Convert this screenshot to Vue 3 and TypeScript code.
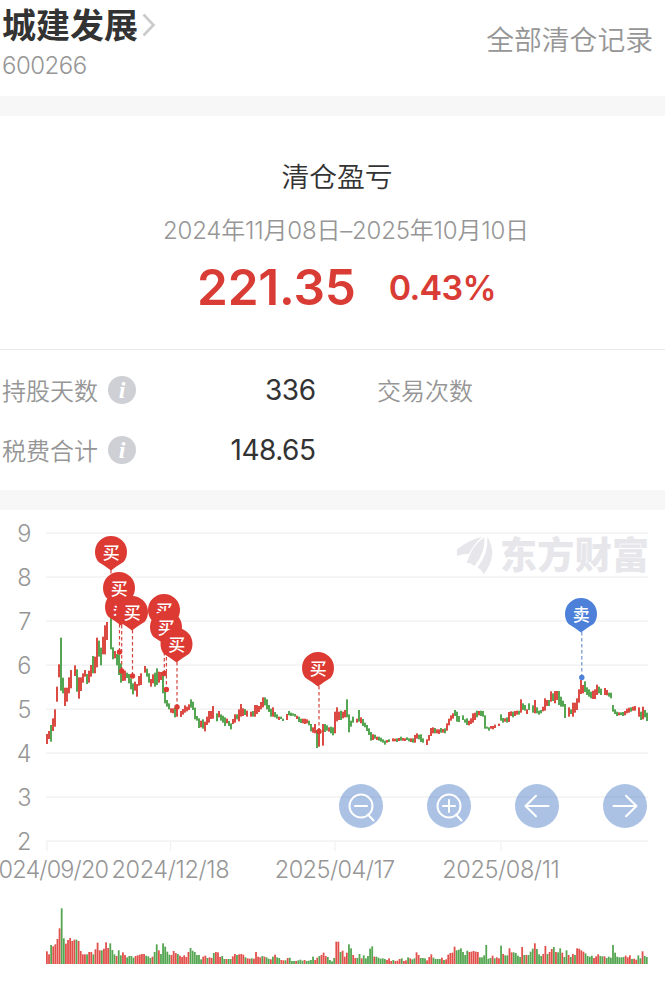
<script setup lang="ts">
interface Bar {
  x: number
  y: number
  h: number
  up: boolean
}

interface Marker {
  x: number
  y: number
  lineX: number
  endY: number
  label: string
  kind: 'buy' | 'sell'
}

// Each group: origin x, origin y, then "x top bottom direction" in thirds of a pixel.
const priceGroups: { ox: number; oy: number; rows: string }[] = [
  {
    ox: 0,
    oy: 10,
    rows: `141 642 672 r,147 633 657 r,153 615 665 g,159 595 633 r,165 568 620 r,171 500 545 r,177 433 472 r,183 353 512 g,189 473 520 g,195 503 558 r,201 503 545 r,207 472 520 r,213 450 505 r,225 436 468 r,231 448 515 g,237 472 536 r,243 472 513 r,249 460 488 r,255 450 470 r,261 462 492 g,267 452 488 r,273 435 470 r,279 408 460 g,285 410 460 r,291 353 442 r,297 362 410 g,303 383 436 g,309 350 403 r,315 316 403 r,321 306 360 r,333 290 388 g,339 382 418 g,345 393 415 r,351 402 436 g,357 403 465 g,363 430 488 g,369 455 483 r,375 452 482 r,381 458 474 g,387 462 490 g,393 475 508 g,399 490 523 g,405 485 512 r,411 492 530 r,417 468 497 r,423 460 495 r,435 438 458 r,441 446 470 g,447 460 488 g,453 477 500 r,459 463 490 r,465 458 500 g,471 445 495 g,477 455 488 r,483 456 480 r,489 456 520 g,495 508 550 g,501 540 560 g,507 550 568 g,513 565 578 r,519 565 580 r,525 562 592 g,531 560 590 r,543 573 591 r,549 567 584 r,555 556 578 r,561 560 574 r,567 553 570 r,573 538 563 g,579 545 570 g,585 563 598 g,591 588 602 g,597 595 624 g,603 602 622 r,609 598 626 g,615 605 634 r,621 590 615 r,627 573 608 r,633 573 597 r,639 558 596 r,651 580 604 g`,
  },
  {
    ox: 190,
    oy: 110,
    rows: `87 273 292 r,93 283 302 g,99 287 308 g,105 292 318 g,111 296 310 r,117 303 318 g,123 310 328 g,129 297 312 r,135 283 308 r,141 283 298 g,147 268 304 r,153 252 290 r,159 265 288 r,165 267 285 g,171 272 290 r,183 275 290 r,189 273 290 g,195 255 290 r,201 255 282 r,207 258 276 r,213 246 268 r,219 232 262 r,225 232 256 g,231 238 268 g,237 255 276 g,243 266 290 g,249 262 290 r,255 276 292 g,261 283 296 g,267 290 300 r,273 290 297 g,279 296 303 g,291 282 300 r,297 273 286 g,303 278 288 g,309 280 287 g,315 282 290 g,321 287 297 r,327 290 306 g,333 296 309 g,339 296 310 r,345 296 312 r,351 298 310 r,357 302 316 g,363 312 334 g,369 322 338 r,375 312 340 r,381 330 384 g,387 325 380 r,399 312 377 r,405 312 336 g,411 316 332 g,417 322 335 r,423 320 340 g,429 322 346 g,435 275 340 r,441 262 304 r,447 275 300 r,453 272 300 g,459 275 295 r,465 270 292 r,471 238 292 g,477 283 337 g,483 302 320 g,489 290 308 g,501 296 308 r,507 270 305 g,513 292 310 r,519 297 318 g,525 308 322 g,531 315 333 g,537 325 345 g,543 336 362 g,549 343 360 r,555 344 356 g,561 350 360 r,567 350 362 g,573 353 365 g,579 358 368 g,585 362 374 g,591 360 368 r,597 358 366 g,609 355 364 r,615 356 364 r,621 355 366 g,627 354 363 r`,
  },
  {
    ox: 400,
    oy: 10,
    rows: `3 650 662 g,9 654 662 r,15 655 663 r,21 652 660 g,27 655 664 g,33 655 666 r,39 655 668 g,45 645 668 r,51 640 656 r,57 644 658 g,63 643 666 g,69 655 668 g,81 658 675 r,87 645 662 r,93 624 648 r,99 622 640 r,105 624 640 g,111 628 640 r,117 628 642 r,123 624 638 g,129 627 638 r,135 625 640 g,141 610 632 r,147 596 616 r,153 586 602 r,159 580 596 r,165 570 588 g,171 575 605 g,177 588 606 g,189 586 600 g,195 598 608 g,201 595 615 g,207 602 616 r,213 595 612 r,219 580 608 r,225 578 600 r,231 572 592 g,237 573 586 r,243 572 588 g,249 573 590 g,255 586 626 g,261 620 626 g,267 622 632 g,273 618 626 r,279 618 628 r,285 614 624 r,297 611 618 r,303 583 602 g,309 594 608 g,315 595 605 r,321 592 608 g,327 576 606 r,333 574 588 r,339 575 592 g,345 573 588 r,351 572 584 r,357 572 584 g,363 538 578 r,369 550 570 g,375 555 572 g,381 568 582 r,387 550 570 g,399 556 578 g,405 540 580 r,411 562 580 g,417 572 584 g,423 570 580 g,429 560 574 r,435 535 572 r,441 540 558 r,447 540 558 g,453 514 545 r,459 520 543 g,465 513 550 r,471 513 540 r,477 513 555 g,483 530 560 g,489 542 560 g,495 552 594 g,507 562 590 r,513 568 582 g,519 548 590 r,525 548 578 r,531 535 570 r,537 508 548 r,543 480 522 r,549 495 520 r,555 484 516 g,561 502 525 g,567 508 530 g,573 515 535 g,579 512 537 r,585 508 537 r,591 494 525 r,597 500 520 g,603 506 525 g,615 504 525 r,621 510 526 r,627 518 530 g,633 518 535 g,639 555 575 g,645 568 582 g,651 575 588 g,657 577 586 r,663 577 585 g,669 576 588 g,675 573 586 r,681 566 580 r,687 563 578 r,693 562 575 g,699 560 572 r,705 558 572 r,717 562 590 r,723 575 600 g,729 560 598 r,735 570 592 g,741 578 603 g`,
  },
]

const candles: Bar[] = priceGroups.flatMap(({ ox, oy, rows }) =>
  rows.split(',').map((row) => {
    const [x, top, bottom, dir] = row.trim().split(' ')
    return {
      x: ox + Math.floor(Number(x) / 3) - 1,
      y: oy + Number(top) / 3,
      h: (Number(bottom) - Number(top)) / 3,
      up: dir === 'r',
    }
  }),
)

// Volume per session in thirds of a pixel, suffixed with the direction.
const volumeData =
  '38r 29r 57g 53r 59r 75r 107r 167g 77g 61r 72r 78r 69r 73r 73g 69r 39r 29r 29r 29g 36r 36r 29g 44r 64r 41r 41g 46r 65r 48r 62g 42g 29g 24r 41g 26g 35r 27r 20g 24g 24g 19g 24r 26r 28r 30r 30r 25g 23g 18g 22r 36g 59g 41r 30g 62g 52g 37g 28g 27r 39r 33r 30g 25r 21r 26r 21r 36r 48g 40g 36g 27g 27g 14g 22r 25r 18g 20r 18r 33g 36r 35r 21r 24g 15g 15r 15g 15g 23r 30r 27g 29r 30r 28r 20g 17r 16r 17g 16r 36r 22r 20r 24g 22r 20g 16g 14r 22g 28r 20g 18g 12r 11r 11g 18r 19g 9g 9g 9r 11g 13g 10g 12r 9g 10g 12g 22g 12r 19r 24g 27r 34r 24r 21g 12g 8g 18g 67r 67r 36g 40r 22r 34r ' +
  '59g 47g 27r 18r 18g 30g 17r 26g 17g 24g 46g 53g 22r 22g 19g 16g 17g 15g 12r 17r 9r 12g 9r 10r 15r 17g 9r 11r 20g 17r 14g 17g 35r 27r 18g 18g 17g 11r 21r 29r 19g 15g 15g 15g 19r 12g 14r 28r 33r 34r 52r 41g 43g 47g 36g 27g 40g 36r 37r 39r 37r 36r 20g 20g 26g 57g 16g 18g 25r 17g 20r 17r 55g 30r 26g 26g 47r 35r 35g 33g 25g 21g 51r 27g 27r 27g 37g 46g 62r 45g 29g 24g 30r 54r 30g 36r 45r 51g 36r 35g 47g 34r 21g 41g 27r 21g 30r 27g 47r 46r 41r 37r 32g 24g 22g 25g 18r 23r 29r 24g 23g 23r 18g 22g 19g 57g 34g 22g 20g 20g 21g 25r 20r 26r 15g 16r 13r 26g 17g 38r 24g 21g'

const volumeItems = volumeData.split(' ')
const pitch = 602 / volumeItems.length
const volumes: Bar[] = volumeItems.map((item, i) => {
  const h = parseInt(item, 10) / 3
  return { x: 46 + i * pitch, y: 454 - h, h, up: item.endsWith('r') }
})

const markers: Marker[] = [
  { x: 111, y: 42, lineX: 111, endY: 64, label: '买', kind: 'buy' },
  { x: 121, y: 97, lineX: 121.7, endY: 161, label: '买', kind: 'buy' },
  { x: 119, y: 78, lineX: 119.5, endY: 142, label: '买', kind: 'buy' },
  { x: 132, y: 102, lineX: 132.5, endY: 166, label: '买', kind: 'buy' },
  { x: 164, y: 100, lineX: 164.3, endY: 163.5, label: '买', kind: 'buy' },
  { x: 166, y: 117, lineX: 166.4, endY: 179.5, label: '买', kind: 'buy' },
  { x: 176.5, y: 134, lineX: 177, endY: 197, label: '买', kind: 'buy' },
  { x: 318, y: 158, lineX: 319, endY: 221.5, label: '买', kind: 'buy' },
  { x: 581, y: 104, lineX: 581.8, endY: 167.5, label: '卖', kind: 'sell' },
]

const levels = [9, 8, 7, 6, 5, 4, 3, 2]
const dates = [
  { x: 47, width: 124, label: '2024/09/20' },
  { x: 170.5, width: 118, label: '2024/12/18' },
  { x: 335, width: 120.5, label: '2025/04/17' },
  { x: 501, width: 117.5, label: '2025/08/11' },
]
const tools = ['zoom-out', 'zoom-in', 'back', 'forward']
</script>

<template>
  <main class="page">
    <header class="header">
      <div class="stock">
        <div class="name">
          <span>城建发展</span>
          <svg class="chevron" width="14" height="24" viewBox="0 0 14 24">
            <path d="M1.5 1.5 11.5 12 1.5 22.5" />
          </svg>
        </div>
        <div class="code">600266</div>
      </div>
      <div class="all">全部清仓记录</div>
    </header>

    <section class="summary">
      <div class="caption">清仓盈亏</div>
      <div class="period"><span>2024年11月08日</span><span class="dash">–</span><span>2025年10月10日</span></div>
      <div class="result">
        <span class="amount">221.35</span>
        <span class="percent">0.43%</span>
      </div>
    </section>

    <section class="stats">
      <div class="row">
        <span class="label">持股天数</span>
        <svg class="info" width="28" height="28" viewBox="0 0 28 28">
          <circle cx="14" cy="14" r="14" />
          <text x="14" y="22">i</text>
        </svg>
        <span class="value">336</span>
        <span class="label second">交易次数</span>
      </div>
      <div class="row">
        <span class="label">税费合计</span>
        <svg class="info" width="28" height="28" viewBox="0 0 28 28">
          <circle cx="14" cy="14" r="14" />
          <text x="14" y="22">i</text>
        </svg>
        <span class="value">148.65</span>
      </div>
    </section>

    <section class="chart">
      <svg width="665" height="482" viewBox="0 0 665 482">
        <g class="grid">
          <rect v-for="(level, i) in levels" :key="level" x="46" :y="22.3 + i * 44" width="602" height="1.5" />
          <rect v-for="d in dates" :key="d.label" :x="d.x - 0.7" y="331" width="1.4" height="10" />
        </g>
        <g class="axis">
          <text v-for="(level, i) in levels" :key="level" x="31.5" :y="31.5 + i * 44" text-anchor="end">{{ level }}</text>
          <text v-for="d in dates" :key="d.label" :x="d.x" y="367.5" text-anchor="middle" :textLength="d.width">{{ d.label }}</text>
        </g>

        <g class="brand">
          <g transform="translate(400 10) scale(0.3333)">
            <path d="M171 88Q206 60 246 50Q222 72 207 101Q189 101 171 108Z" />
            <path d="M253 52Q217 76 200 128Q215 128 223 139Q257 98 253 52Z" />
            <path d="M262 50Q296 105 251 163Q245 149 233 142Q266 100 262 50Z" />
          </g>
          <text x="500" y="58.5" textLength="149">东方财富</text>
        </g>

        <rect v-for="(b, i) in candles" :key="'c' + i" :class="b.up ? 'up' : 'down'" :x="b.x" :y="b.y" width="2" :height="b.h" />
        <rect v-for="(b, i) in volumes" :key="'v' + i" :class="['volume', b.up ? 'up' : 'down']" :x="b.x" :y="b.y" width="1.8" :height="b.h" />

        <g v-for="(m, i) in markers" :key="'l' + i" :class="m.kind">
          <line :x1="m.lineX" :y1="m.y + 18" :x2="m.lineX" :y2="m.endY" />
          <circle v-if="i > 0" :cx="m.lineX" :cy="m.endY" r="2.7" />
        </g>
        <g v-for="(m, i) in markers" :key="'m' + i" :class="['pin', m.kind]" :transform="`translate(${m.x} ${m.y})`">
          <path d="M-12.4 10.1A16 16 0 1 1 12.4 10.1Q6 14 0 18.5Q-6 14-12.4 10.1Z" />
          <text x="0.3" y="6.6">{{ m.label }}</text>
        </g>
      </svg>

      <div class="tools">
        <button v-for="tool in tools" :key="tool" class="tool" type="button">
          <svg width="44" height="44" viewBox="0 0 44 44">
            <template v-if="tool === 'zoom-out' || tool === 'zoom-in'">
              <circle cx="22" cy="22" r="11.5" />
              <path d="M16 22H28M29 30.5 34.5 36.5" />
              <path v-if="tool === 'zoom-in'" d="M22 16V28" />
            </template>
            <path v-else-if="tool === 'back'" d="M33.5 22H10.5M21 11.8 10.5 22 21 32.2" />
            <path v-else d="M10.5 22H33.5M23 11.8 33.5 22 23 32.2" />
          </svg>
        </button>
      </div>
    </section>
  </main>
</template>

<style>
body {
  margin: 0;
  background: #fff;
}
</style>

<style scoped>
.page {
  width: 665px;
  height: 992px;
  overflow: hidden;
  background: #fff;
  color: #333;
  font-family: Inter, 'Noto Sans CJK SC', sans-serif;
}
.header {
  height: 96px;
  box-sizing: border-box;
  display: flex;
  justify-content: space-between;
  padding: 0 12px 0 2px;
}
.name {
  display: flex;
  align-items: center;
  gap: 4px;
  height: 50px;
  font-size: 34px;
  font-weight: 700;
  line-height: 48px;
}
.name span {
  padding-top: 2px;
}
.chevron {
  fill: none;
  stroke: #cbcbcb;
  stroke-width: 2.6;
}
.code {
  font-size: 24px;
  font-weight: 350;
  line-height: 32px;
  letter-spacing: -0.5px;
  color: #969696;
}
.all {
  font-size: 27.8px;
  font-weight: 350;
  line-height: 81px;
  color: #969696;
}
.summary {
  height: 233px;
  box-sizing: border-box;
  padding-top: 41px;
  box-shadow: 0 -20px 0 #f7f7f7;
  margin-top: 20px;
  display: flex;
  flex-direction: column;
  align-items: center;
}
.caption {
  font-size: 27.8px;
  line-height: 40px;
  padding-left: 9px;
  font-weight: 350;
}
.period {
  display: flex;
  padding-left: 27px;
  margin-top: 14px;
  font-size: 24px;
  font-weight: 350;
  line-height: 40px;
  letter-spacing: -0.2px;
  color: #969696;
}
.result {
  display: flex;
  align-items: center;
  gap: 33px;
  margin-top: 4px;
  padding-left: 28px;
  height: 64px;
  color: #d93c34;
  font-weight: 600;
}
.amount {
  font-size: 49.5px;
  letter-spacing: -0.2px;
}
.percent {
  font-size: 34px;
  letter-spacing: -0.7px;
}
.stats {
  height: 141px;
  box-sizing: border-box;
  border-top: 1px solid #e9e9e9;
  padding-top: 10px;
}
.row {
  display: flex;
  align-items: center;
  height: 60px;
  padding-left: 2px;
}
.label {
  font-size: 24px;
  font-weight: 350;
  color: #969696;
  padding-bottom: 2px;
}
.info {
  margin-left: 10px;
  fill: #cfd0d5;
}
.info text {
  fill: #fff;
  font: italic bold 24px 'Liberation Serif', serif;
  text-anchor: middle;
}
.value {
  width: 179.5px;
  text-align: right;
  font-size: 28px;
  letter-spacing: -0.5px;
}
.second {
  margin-left: 61.5px;
}
.chart {
  position: relative;
  margin-top: 20px;
  height: 482px;
  box-shadow: 0 -20px 0 #f7f7f7;
}
.chart > svg {
  display: block;
}
.grid {
  fill: #f2f2f2;
}
.axis {
  font-size: 23.5px;
  font-weight: 350;
  fill: #969696;
}
.brand {
  fill: #e6e6eb;
}
.brand text {
  font-size: 37px;
  font-weight: 900;
}
.up {
  fill: #dc4b43;
}
.down {
  fill: #55a653;
}
.volume.up {
  fill: #e2504b;
}
.buy {
  fill: #dc3a32;
  stroke: #d2433e;
}
.sell {
  fill: #4c80d9;
  stroke: #6e93cc;
}
.buy line,
.sell line {
  stroke-width: 1.2;
  stroke-dasharray: 3.5 2.5;
}
.buy circle,
.sell circle,
.pin {
  stroke: none;
}
.pin text {
  fill: #fff;
  font-size: 17px;
  font-weight: 500;
  text-anchor: middle;
}
.tools {
  position: absolute;
  top: 274px;
  right: 18px;
  display: flex;
  gap: 44px;
}
.tool {
  width: 44px;
  height: 44px;
  padding: 0;
  border: 0;
  border-radius: 50%;
  background: rgba(77, 126, 199, 0.47);
}
.tool svg {
  display: block;
  fill: none;
  stroke: #fff;
  stroke-width: 2;
  stroke-linecap: round;
  stroke-linejoin: round;
}
</style>
